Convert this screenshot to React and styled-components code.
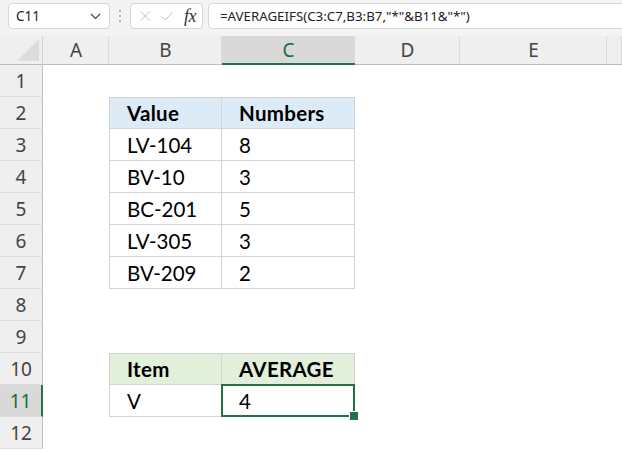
import React from 'react';
import styled, { createGlobalStyle } from 'styled-components';

const GlobalStyle = createGlobalStyle`
  html, body {
    margin: 0;
    padding: 0;
    background: #ffffff;
  }
  * {
    box-sizing: border-box;
  }
`;

const Window = styled.div`
  width: 622px;
  height: 451px;
  overflow: hidden;
  background: #ffffff;
  font-family: 'Noto Sans', 'Open Sans', sans-serif;
`;

const Toolbar = styled.div`
  display: flex;
  align-items: flex-start;
  height: 36px;
  padding: 3px 0 0 8px;
  background: #f3f3f3;
  white-space: nowrap;
`;

const NameBox = styled.div`
  display: flex;
  align-items: center;
  justify-content: space-between;
  width: 102px;
  height: 26px;
  padding: 0 8px 0 7px;
  background: #ffffff;
  border: 1px solid #d8d8d8;
  border-radius: 4px;
  font-size: 13.5px;
  color: #222;
`;

const Dots = styled.div`
  display: flex;
  flex-direction: column;
  justify-content: center;
  gap: 3px;
  width: 20px;
  height: 26px;
  align-items: center;

  span {
    width: 2px;
    height: 2px;
    background: #9a9a9a;
    border-radius: 1px;
  }
`;

const FuncBox = styled.div`
  display: flex;
  align-items: center;
  gap: 9px;
  width: 73px;
  height: 26px;
  padding: 0 6px 0 8px;
  background: #ffffff;
  border: 1px solid #d8d8d8;
  border-radius: 4px;
`;

const Fx = styled.span`
  font-family: 'Liberation Serif', serif;
  font-style: italic;
  font-size: 18px;
  color: #333;
  margin-left: 2px;
  letter-spacing: -0.5px;
`;

const FormulaInput = styled.div`
  display: flex;
  align-items: center;
  flex: 1;
  height: 26px;
  margin-left: 5px;
  margin-right: -10px;
  padding-left: 11px;
  background: #ffffff;
  border: 1px solid #d8d8d8;
  border-radius: 4px;
  font-size: 13.3px;
  color: #222;
`;

const Sheet = styled.div`
  display: grid;
  grid-template-columns: 43px 66px 113px 133px 105px 147px 15px;
  grid-template-rows: 29px repeat(12, 32px);
`;

const Corner = styled.div`
  position: relative;
  background: #efefef;
  border-right: 1px solid #d4d4d4;
  border-bottom: 1px solid #bdbdbd;

  &::after {
    content: '';
    position: absolute;
    right: 3px;
    bottom: 3px;
    width: 0;
    height: 0;
    border-left: 22px solid transparent;
    border-bottom: 22px solid #dcdcdc;
  }
`;

const ColHead = styled.div`
  display: flex;
  align-items: center;
  justify-content: center;
  background: ${({ $active }) => ($active ? '#d9d9d9' : '#efefef')};
  border-bottom: ${({ $active }) => ($active ? '2px solid #217346' : '1px solid #bdbdbd')};
  box-shadow: inset -1px 0 0 #dadada;
  font-size: 19px;
  color: ${({ $active }) => ($active ? '#1d6b40' : '#444444')};
  padding-top: ${({ $active }) => ($active ? '1px' : '0')};
`;

const RowHead = styled.div`
  display: flex;
  align-items: center;
  justify-content: center;
  background: ${({ $active }) => ($active ? '#d9d9d9' : '#efefef')};
  border-right: ${({ $active }) => ($active ? '2px solid #217346' : '1px solid #bdbdbd')};
  border-bottom: 1px solid #dddddd;
  font-size: 19px;
  color: ${({ $active }) => ($active ? '#1d6b40' : '#444444')};
`;

const fills = {
  blue: '#ddebf7',
  green: '#e2efda',
};

const Cell = styled.div`
  position: relative;
  display: flex;
  align-items: center;
  padding-left: 17px;
  background: ${({ $fill }) => fills[$fill] || '#ffffff'};
  border-right: ${({ $boxed }) => ($boxed ? '1px solid #d4d4d4' : 'none')};
  border-bottom: ${({ $boxed }) => ($boxed ? '1px solid #d4d4d4' : 'none')};
  border-top: ${({ $top }) => ($top ? '1px solid #d4d4d4' : 'none')};
  border-left: ${({ $left }) => ($left ? '1px solid #d4d4d4' : 'none')};
  font-family: Lato, 'Open Sans', sans-serif;
  font-size: 20.5px;
  font-weight: ${({ $bold }) => ($bold ? 700 : 400)};
  letter-spacing: ${({ $bold }) => ($bold ? '0.3px' : '0')};
  color: #000000;
`;

const Selection = styled.div`
  position: absolute;
  z-index: 2;
  top: -1px;
  left: -1px;
  right: -1px;
  bottom: -1px;
  border: 2px solid #217346;
  pointer-events: none;

  &::after {
    content: '';
    position: absolute;
    right: -6px;
    bottom: -6px;
    width: 8px;
    height: 8px;
    background: #217346;
    border: 1px solid #ffffff;
  }
`;

const Icon = ({ children }) => (
  <svg width="16" height="16" viewBox="0 0 16 16" fill="none" stroke="#b5b5b5" strokeWidth="1.1">
    {children}
  </svg>
);

const columns = ['A', 'B', 'C', 'D', 'E', ''];

const tableRows = {
  2: { fill: 'blue', bold: true, top: true, cells: ['Value', 'Numbers'] },
  3: { cells: ['LV-104', '8'] },
  4: { cells: ['BV-10', '3'] },
  5: { cells: ['BC-201', '5'] },
  6: { cells: ['LV-305', '3'] },
  7: { cells: ['BV-209', '2'] },
  10: { fill: 'green', bold: true, top: true, cells: ['Item', 'AVERAGE'] },
  11: { cells: ['V', '4'], selected: 1 },
};

const rowNumbers = Array.from({ length: 12 }, (_, i) => i + 1);

const App = () => {
  return (
    <Window>
      <GlobalStyle />
      <Toolbar>
        <NameBox>
          <span>C11</span>
          <svg width="11" height="7" viewBox="0 0 11 7" fill="none" stroke="#444" strokeWidth="1.2">
            <path d="M1 1l4.5 4.5L10 1" />
          </svg>
        </NameBox>
        <Dots>
          <span />
          <span />
          <span />
        </Dots>
        <FuncBox>
          <Icon>
            <path d="M2 2l12 12M14 2L2 14" />
          </Icon>
          <Icon>
            <path d="M1 8.5l4.5 4.5L15 3" />
          </Icon>
          <Fx>fx</Fx>
        </FuncBox>
        <FormulaInput>=AVERAGEIFS(C3:C7,B3:B7,"*"&amp;B11&amp;"*")</FormulaInput>
      </Toolbar>
      <Sheet>
        <Corner />
        {columns.map((c, i) => (
          <ColHead key={i} $active={c === 'C'}>
            {c}
          </ColHead>
        ))}
        {rowNumbers.map((n) => {
          const row = tableRows[n];
          return (
            <React.Fragment key={n}>
              <RowHead $active={n === 11}>{n}</RowHead>
              <Cell />
              {row ? (
                row.cells.map((text, i) => (
                  <Cell
                    key={i}
                    $boxed
                    $fill={row.fill}
                    $bold={row.bold}
                    $top={row.top}
                    $left={i === 0}
                  >
                    {text}
                    {row.selected === i && <Selection />}
                  </Cell>
                ))
              ) : (
                <>
                  <Cell />
                  <Cell />
                </>
              )}
              <Cell />
              <Cell />
              <Cell />
            </React.Fragment>
          );
        })}
      </Sheet>
    </Window>
  );
};

export default App;
